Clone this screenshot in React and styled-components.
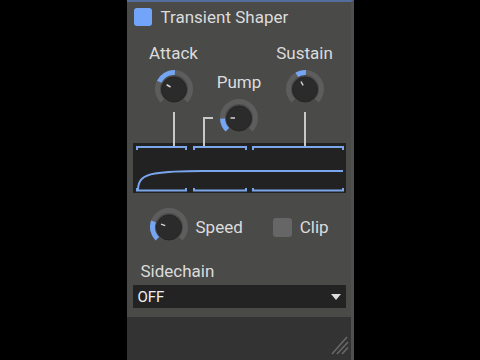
import React from "react";
import styled, { createGlobalStyle } from "styled-components";

const GlobalStyle = createGlobalStyle`
  body {
    margin: 0;
    background: #000;
    font-family: Roboto, "Noto Sans", sans-serif;
  }
`;

const Page = styled.div`
  display: flex;
  justify-content: center;
  min-height: 360px;
  background: #000;
`;

const Panel = styled.div`
  width: 227px;
  box-sizing: border-box;
  display: flex;
  flex-direction: column;
  background: #4a4a49;
  border-top: 2px solid #556d9c;
  border-right: 3px solid #505050;
  color: #dcdcdc;
`;

const Header = styled.div`
  height: 30px;
  display: flex;
  align-items: center;
  gap: 9px;
  padding-left: 7px;
`;

const EnableBox = styled.div`
  width: 18px;
  height: 18px;
  border-radius: 3px;
  background: #72a5fa;
`;

const Title = styled.div`
  font-size: 17px;
  line-height: 20px;
`;

const KnobGrid = styled.div`
  margin: 11px 0 0 6px;
  height: 100px;
  display: grid;
  grid-template-columns: 82px 49px 82px;
`;

const KnobColumn = styled.div`
  display: flex;
  flex-direction: column;
  align-items: center;
  padding-top: ${(p) => p.$offset || 0}px;
`;

const Label = styled.div`
  font-size: 17px;
  line-height: 20px;
  white-space: nowrap;
`;

const KnobSlot = styled.div`
  margin-top: 7px;
  width: 38px;
  height: 38px;
  flex: none;
`;

const Wire = styled.div`
  flex: 1;
  width: 2px;
  margin-top: 4px;
  background: #c8c8c8;
`;

const PumpRow = styled.div`
  flex: 1;
  align-self: flex-start;
  margin-left: -12px;
  display: flex;
`;

const ElbowWire = styled.div`
  width: 8px;
  margin: 25px 7px 0 0;
  border-left: 2px solid #c8c8c8;
  border-top: 2px solid #c8c8c8;
`;

const Graph = styled.svg`
  display: block;
  margin-left: 6px;
`;

const ControlRow = styled.div`
  margin-top: 15px;
  padding-left: 23px;
  display: flex;
  align-items: center;
`;

const SpeedText = styled.span`
  margin-left: 8px;
  font-size: 17px;
  line-height: 20px;
`;

const ClipBox = styled.div`
  margin-left: 30px;
  width: 19px;
  height: 19px;
  border-radius: 3px;
  background: #666;
`;

const ClipText = styled.span`
  margin-left: 8px;
  font-size: 17px;
  line-height: 20px;
`;

const SideLabel = styled.div`
  margin: 15px 0 0 14px;
  font-size: 17px;
  line-height: 20px;
`;

const Select = styled.div`
  margin: 4px 5px 0 6px;
  height: 23px;
  box-sizing: border-box;
  padding: 0 5px;
  display: flex;
  align-items: center;
  justify-content: space-between;
  background: #232323;
  font-size: 15px;
  color: #eee;
`;

const Arrow = styled.div`
  width: 0;
  height: 0;
  border-left: 5.5px solid transparent;
  border-right: 5.5px solid transparent;
  border-top: 6px solid #ddd;
`;

const Footer = styled.div`
  margin-top: 9px;
  flex: 1;
  display: flex;
  justify-content: flex-end;
  align-items: flex-end;
  padding: 0 2px 5px 0;
  background: #333;
`;

const polar = (a, r) => {
  const t = (a * Math.PI) / 180;
  return [19 + r * Math.sin(t), 19 - r * Math.cos(t)];
};

const arc = (from, to, r) => {
  const [x1, y1] = polar(from, r);
  const [x2, y2] = polar(to, r);
  const large = to - from > 180 ? 1 : 0;
  return `M${x1} ${y1} A${r} ${r} 0 ${large} 1 ${x2} ${y2}`;
};

const Knob = ({ from, to, tick }) => {
  const [tx1, ty1] = polar(tick, 4);
  const [tx2, ty2] = polar(tick, 8.5);
  return (
    <svg width="38" height="38" viewBox="0 0 38 38">
      <path d={arc(-135, 135, 16.5)} stroke="#5d5d5d" strokeWidth="5" fill="none" />
      <path d={arc(from, to, 16.5)} stroke="#74a6f4" strokeWidth="5" fill="none" />
      <circle cx="19" cy="19.5" r="12.5" fill="#2b2b2b" stroke="#252525" />
      <line x1={tx1} y1={ty1} x2={tx2} y2={ty2} stroke="#d4d4d4" strokeWidth="1.5" />
    </svg>
  );
};

const segments = [
  [4, 53],
  [61, 113],
  [120, 210],
];

const Envelope = () => (
  <Graph width="213" height="50" viewBox="0 0 213 50">
    <rect width="213" height="50" fill="#222" />
    {[41, 71, 172].map((x) => (
      <line key={x} x1={x} y1="0" x2={x} y2="4" stroke="#c8c8c8" strokeWidth="2" />
    ))}
    {segments.map(([a, b]) => (
      <g key={a} stroke="#7ba6ea" strokeWidth="2" fill="none">
        <path d={`M${a} 7 V4 H${b} V7`} />
        <path d={`M${a} 45 V47.5 H${b} V45`} />
      </g>
    ))}
    <path
      d="M5 47 C5 37 10 32.5 22 30.5 S50 28 70 28 L210 28"
      stroke="#7aa6ee"
      strokeWidth="2"
      fill="none"
    />
  </Graph>
);

const Grip = () => (
  <svg width="18" height="20" viewBox="0 0 18 20">
    <g stroke="#6a6a6a" strokeWidth="1.5">
      <line x1="1" y1="19" x2="16" y2="2" />
      <line x1="6" y1="19" x2="17" y2="7" />
      <line x1="11" y1="19" x2="17" y2="12.5" />
    </g>
  </svg>
);

export default function App() {
  return (
    <Page>
      <GlobalStyle />
      <Panel>
        <Header>
          <EnableBox />
          <Title>Transient Shaper</Title>
        </Header>

        <KnobGrid>
          <KnobColumn>
            <Label>Attack</Label>
            <KnobSlot>
              <Knob from={-64} to={3} tick={-60} />
            </KnobSlot>
            <Wire />
          </KnobColumn>
          <KnobColumn $offset={29}>
            <Label>Pump</Label>
            <PumpRow>
              <ElbowWire />
              <KnobSlot>
                <Knob from={-135} to={-92} tick={-90} />
              </KnobSlot>
            </PumpRow>
          </KnobColumn>
          <KnobColumn>
            <Label>Sustain</Label>
            <KnobSlot>
              <Knob from={-30} to={3} tick={-28} />
            </KnobSlot>
            <Wire />
          </KnobColumn>
        </KnobGrid>

        <Envelope />

        <ControlRow>
          <Knob from={-135} to={-70} tick={-70} />
          <SpeedText>Speed</SpeedText>
          <ClipBox />
          <ClipText>Clip</ClipText>
        </ControlRow>

        <SideLabel>Sidechain</SideLabel>
        <Select>
          <span>OFF</span>
          <Arrow />
        </Select>

        <Footer>
          <Grip />
        </Footer>
      </Panel>
    </Page>
  );
}
